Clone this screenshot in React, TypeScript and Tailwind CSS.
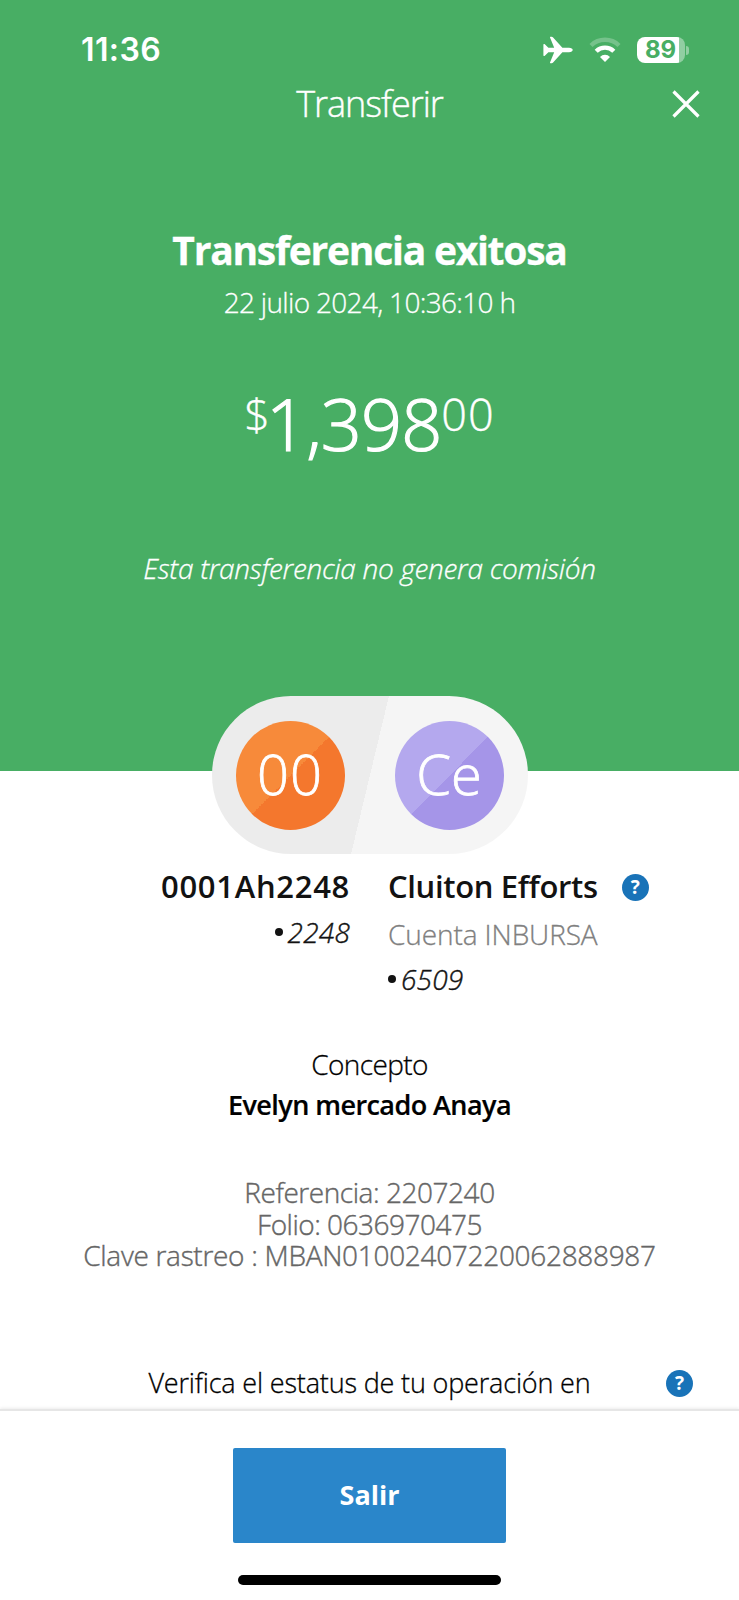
import React from 'react';

const DETAILS = [
  { text: 'Referencia: 2207240', tracking: 'tracking-[-0.45px]' },
  { text: 'Folio: 0636970475', tracking: 'tracking-[-0.5px]' },
  { text: 'Clave rastreo : MBAN01002407220062888987', tracking: 'tracking-[-0.3px]' },
];

const StatusBar = () => (
  <div className="flex h-[50px] items-center justify-between pl-[81px] pr-[50px]">
    <span className="font-['Inter',sans-serif] text-[32px] font-semibold leading-none tracking-[0.4px]">11:36</span>
    <div className="flex items-center">
      <svg width="30" height="28" viewBox="0 0 30 28" fill="currentColor">
        <path d="M7.400.8h1.200c.6 0 1.100.2 1.500.7l9.300 10.300h6.600c2.300 0 3.700 1 3.700 2.200s-1.400 2.200-3.700 2.200h-6.600l-9.300 10.300c-.4.5-.9.700-1.500.700H7.400c-.3 0-.5-.3-.4-.6l4.200-10.400H5.400l-3.600 3.600c-.2.200-.4.300-.7.300H.9c-.3 0-.5-.2-.5-.5V8.400c0-.3.200-.5.500-.5h.2c.3 0 .5.100.7.300l3.600 3.600h5.800L7 1.400c-.1-.3.100-.6.400-.6z" />
      </svg>
      <svg className="ml-[15px]" width="34" height="26" viewBox="0 0 34 26" fill="none" stroke="currentColor">
        <path d="M3 8.500a20 20 0 0 1 28 0" strokeWidth="4.400" opacity="0.25" />
        <path d="M8.200 14.200a12.600 12.600 0 0 1 17.600 0" strokeWidth="4.400" />
        <path d="M17 25l-5-5a6.900 6.900 0 0 1 10 0z" fill="currentColor" stroke="none" />
      </svg>
      <div className="ml-[15px] flex h-[26px] w-[48px] items-center rounded-[8px] bg-[linear-gradient(90deg,#fff_42px,#91cea2_42px)] pl-[8px] font-['Inter',sans-serif] text-[24px] font-bold leading-[30px] text-[#48ae64]">
        89
      </div>
      <div className="ml-[1px] h-[9px] w-[3px] rounded-r-full bg-[#91cea2]" />
    </div>
  </div>
);

const HelpIcon = ({ className }: { className?: string }) => (
  <span className={`flex h-[27px] w-[27px] items-center justify-center rounded-full bg-[#1973b8] text-[19px] font-bold leading-none text-white ${className}`}>
    ?
  </span>
);

// Masked account number, only the last four digits are shown
const CardNumber = ({ digits, className }: { digits: string; className?: string }) => (
  <p className={`flex items-center text-[28px] font-light italic tracking-[0.2px] [-webkit-text-stroke:0.4px] ${className}`}>
    <span className="mr-[5px] h-[8px] w-[8px] rounded-full bg-[#121212]" />
    {digits}
  </p>
);

const Accounts = () => (
  <div className="relative mx-auto -mt-[75px] flex h-[158px] w-[316px] items-center justify-between overflow-hidden rounded-full bg-[linear-gradient(103.500deg,#ececec_50%,#f5f5f5_50%)] px-[24px] text-[56px] font-light leading-none text-white [-webkit-text-stroke:0.8px]">
    <div className="flex h-[109px] w-[109px] items-center justify-center rounded-full bg-[linear-gradient(135deg,#f78a3a_50%,#f4772d_50%)] pb-[4px] tracking-[1px]">
      00
    </div>
    <div className="flex h-[109px] w-[109px] items-center justify-center rounded-full bg-[linear-gradient(135deg,#b4a8ee_50%,#a595e8_50%)] pb-[4px]">
      Ce
    </div>
  </div>
);

const App: React.FC = () => {
  return (
    <div className="flex h-[1600px] w-[739px] flex-col overflow-hidden bg-white font-['Open_Sans',sans-serif] text-[28px] text-[#121212]">
      <header className="h-[771px] shrink-0 bg-[#48ae64] pt-[25px] text-center text-white">
        <StatusBar />
        <div className="mt-[1px] grid h-[56px] grid-cols-[1fr_auto_1fr] items-center">
          <h1 className="col-start-2 text-[36px] font-light leading-none tracking-[-1px] [-webkit-text-stroke:0.4px]">Transferir</h1>
          <button aria-label="Cerrar" className="mr-[39px] justify-self-end">
            <svg width="28" height="28" viewBox="0 0 28 28" stroke="currentColor" strokeWidth="3.200">
              <path d="M1.500 1.500l25 25M26.500 1.500l-25 25" />
            </svg>
          </button>
        </div>
        <h2 className="mt-[93px] text-[39px] font-bold leading-[50px] tracking-[-1.250px] [-webkit-text-stroke:0.3px]">Transferencia exitosa</h2>
        <p className="mt-[7px] text-[28px] font-light leading-[40px] tracking-[-0.680px] [-webkit-text-stroke:0.3px]">22 julio 2024, 10:36:10 h</p>
        <div className="mt-[61px] flex h-[82px] justify-center font-light">
          <span className="-mr-[4px] text-[45px] leading-[62px] [-webkit-text-stroke:0.4px]">$</span>
          <span className="text-[72px] leading-[80px] tracking-[-0.900px] [-webkit-text-stroke:1.2px]">1,398</span>
          <span className="text-[45px] leading-[62px] tracking-[1px] [-webkit-text-stroke:0.4px]">00</span>
        </div>
        <p className="mt-[83px] text-[28px] font-light italic leading-[40px] tracking-[-0.300px] [-webkit-text-stroke:0.3px]">Esta transferencia no genera comisión</p>
      </header>

      <Accounts />

      <div className="mt-[12px] grid grid-cols-[350px_1fr] gap-x-[38px]">
        <div className="flex flex-col items-end">
          <p className="text-[31px] font-semibold leading-[40px] tracking-[0.700px]">0001Ah2248</p>
          <CardNumber digits="2248" className="mt-[7px] leading-[38px]" />
        </div>
        <div>
          <div className="flex items-center">
            <p className="text-[31px] font-semibold leading-[40px] tracking-[-0.350px]">Cluiton Efforts</p>
            <HelpIcon className="ml-[24px] mt-[2px]" />
          </div>
          <p className="mt-[8px] text-[28px] font-light leading-[40px] tracking-[-0.100px] text-[#808080] [-webkit-text-stroke:0.3px]">Cuenta INBURSA</p>
          <CardNumber digits="6509" className="mt-[5px] leading-[40px]" />
        </div>
      </div>

      <div className="mt-[45px] text-center text-black">
        <p className="text-[28px] font-light leading-[40px] tracking-[-0.600px] [-webkit-text-stroke:0.3px]">Concepto</p>
        <p className="mt-[1px] text-[27px] font-semibold leading-[40px] tracking-[-0.560px] [-webkit-text-stroke:0.2px]">Evelyn mercado Anaya</p>
      </div>

      <div className="mt-[52px] text-center text-[28px] font-light leading-[31.500px] text-[#666666] [-webkit-text-stroke:0.4px]">
        {DETAILS.map(row => <p key={row.text} className={row.tracking}>{row.text}</p>)}
      </div>

      <div className="mt-[91px] grid h-[46px] grid-cols-[1fr_auto_1fr] items-start">
        <p className="col-start-2 text-[27px] font-light leading-[40px] tracking-[-0.170px] text-black [-webkit-text-stroke:0.3px]">Verifica el estatus de tu operación en</p>
        <HelpIcon className="mr-[46px] mt-[7px] justify-self-end" />
      </div>

      <footer className="flex flex-1 flex-col items-center border-t-2 border-[#e6e6e6] bg-white shadow-[0_-1px_3px_rgba(0,0,0,0.08)]">
        <button className="mt-[37px] h-[95px] w-[273px] shrink-0 rounded-[2px] bg-[#2a86ca] text-[27px] font-bold text-white">Salir</button>
        <div className="mt-[32px] h-[10px] w-[263px] rounded-full bg-black" />
      </footer>
    </div>
  );
};

export default App;
